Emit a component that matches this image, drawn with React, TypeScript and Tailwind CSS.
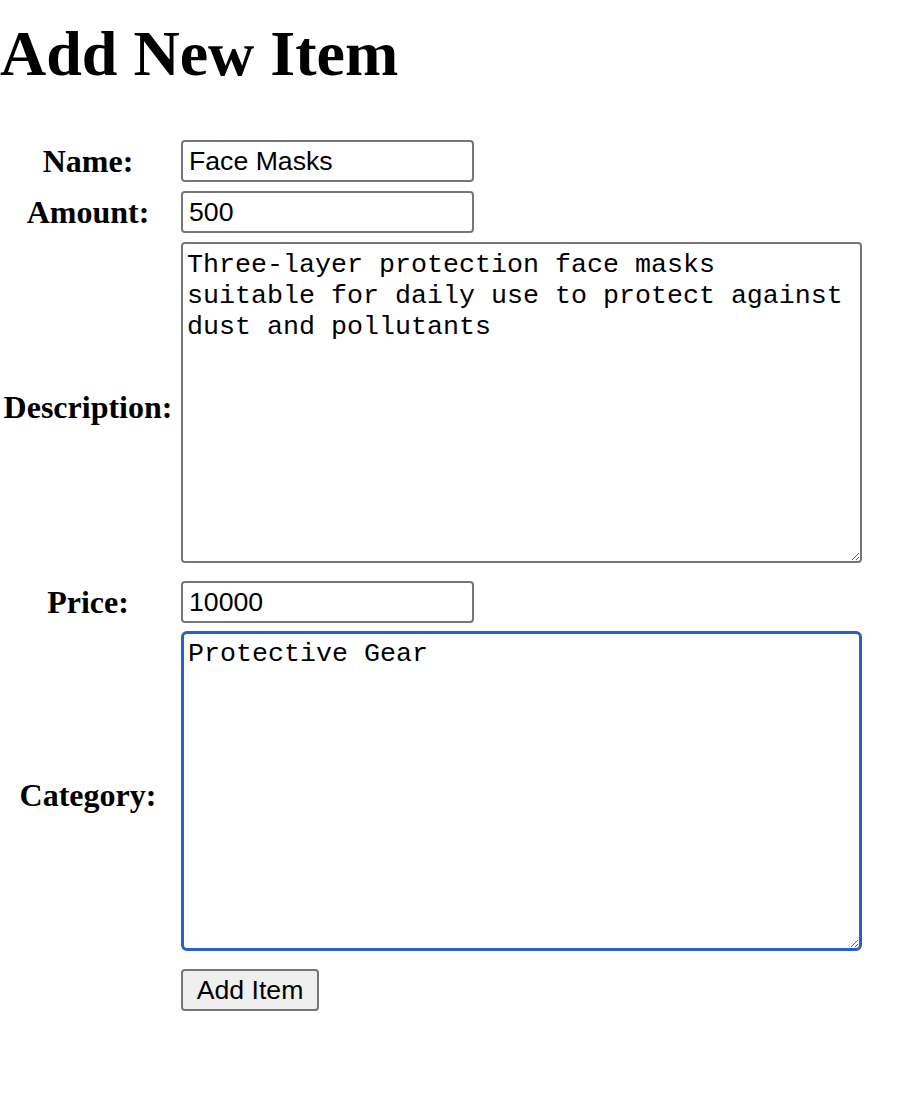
import React from "react";

const labelCls =
  "w-[176px] shrink-0 text-center font-bold text-[32px] leading-[37px] font-['Liberation_Serif',serif] text-black";
const inputCls =
  "ml-[5px] w-[293px] h-[42px] border-2 border-[#767676] rounded-[4px] px-[6px] bg-white text-black text-[26.67px] font-['Liberation_Sans',Arial,sans-serif] outline-none";

export default function App() {
  return (
    <div className="min-h-[1096px] w-[900px] bg-white text-black font-['Liberation_Serif',serif]">
      <h1 className="pt-[17px] text-[64px] font-bold leading-[74px] font-['Liberation_Serif',serif]">
        Add New Item
      </h1>
      <form className="flex flex-col" onSubmit={(e) => e.preventDefault()}>
        <div className="mt-[49px] flex items-center">
          <label className={labelCls}>Name:</label>
          <input className={inputCls} defaultValue="Face Masks" />
        </div>
        <div className="mt-[9px] flex items-center">
          <label className={labelCls}>Amount:</label>
          <input className={inputCls} defaultValue="500" />
        </div>
        <div className="mt-[9px] flex items-center">
          <label className={labelCls}>Description:</label>
          <div className="pb-[9px]">
            <textarea
              className="ml-[5px] block w-[681px] h-[321px] border-2 border-[#767676] rounded-[4px] px-[4px] pt-[6px] pb-[4px] bg-white text-black text-[26.67px] leading-[31px] font-['Liberation_Mono',monospace] outline-none"
              defaultValue="Three-layer protection face masks suitable for daily use to protect against dust and pollutants"
            />
          </div>
        </div>
        <div className="mt-[9px] flex items-center">
          <label className={labelCls}>Price:</label>
          <input className={inputCls} defaultValue="10000" />
        </div>
        <div className="mt-[8px] flex items-center">
          <label className={labelCls}>Category:</label>
          <div className="pb-[9px]">
            <textarea
              className="ml-[5px] block w-[681px] h-[320px] border-[3px] border-[#2a5fcb] rounded-[6px] px-[4px] pt-[5px] pb-[4px] bg-white text-black text-[26.67px] leading-[31px] font-['Liberation_Mono',monospace] outline-none"
              defaultValue="Protective Gear"
            />
          </div>
        </div>
        <div className="mt-[9px] flex items-center">
          <div className="w-[176px] shrink-0" />
          <button
            type="submit"
            className="ml-[5px] w-[138px] h-[42px] border-2 border-[#767676] rounded-[4px] bg-[#efefef] text-black text-[26.67px] leading-none font-['Liberation_Sans',Arial,sans-serif]"
          >
            Add Item
          </button>
        </div>
      </form>
    </div>
  );
}
